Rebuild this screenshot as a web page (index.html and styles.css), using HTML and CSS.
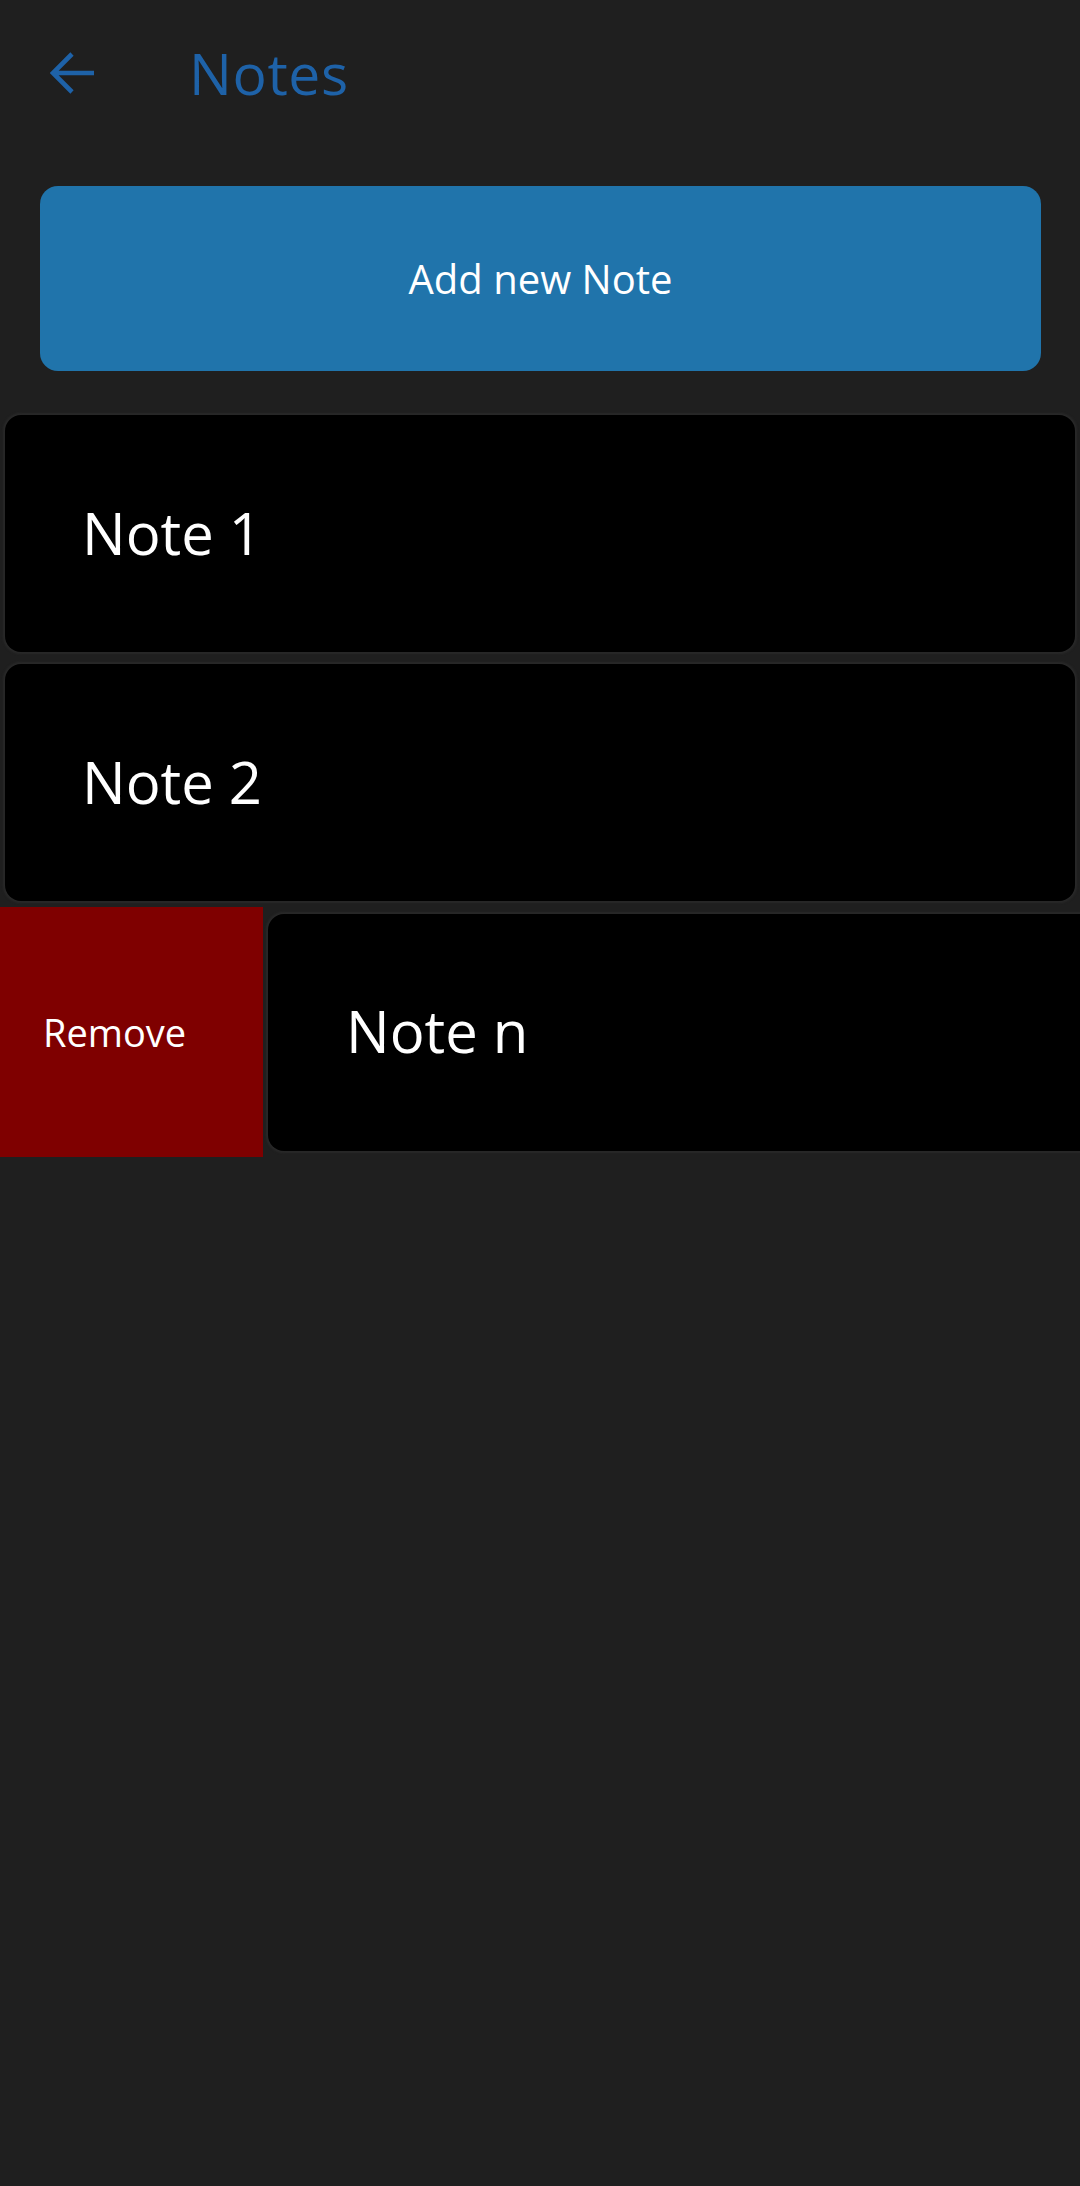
FILE: index.html
```html
<!DOCTYPE html>
<html lang="en">
<head>
<meta charset="utf-8">
<title>Notes</title>
<link rel="stylesheet" href="styles.css">
</head>
<body>
<div class="app">
  <header class="topbar">
    <button class="back" aria-label="Back">
      <svg width="46" height="44" viewBox="0 0 46 44" aria-hidden="true">
        <path d="M44 22H4M22 3L3 22L22 41" fill="none" stroke="#1e62a8" stroke-width="4.6" stroke-linecap="butt" stroke-linejoin="miter"/>
      </svg>
    </button>
    <h1 class="title">Notes</h1>
  </header>

  <button class="add-btn">Add new Note</button>

  <ul class="notes">
    <li class="row"><div class="card">Note 1</div></li>
    <li class="row"><div class="card">Note 2</div></li>
    <li class="row row-swiped">
      <div class="action-remove">Remove</div>
      <div class="card card-shifted">Note n</div>
    </li>
  </ul>
</div>
</body>
</html>
```

FILE: styles.css
```css
* {
  box-sizing: border-box;
}

html, body {
  margin: 0;
  padding: 0;
  background: #1f1f1f;
  overflow-x: hidden;
}

body {
  font-family: "Open Sans", "Noto Sans", sans-serif;
  color: #ffffff;
  width: 1080px;
  min-height: 2186px;
}

.app {
  width: 1080px;
  overflow: hidden;
}

.topbar {
  height: 146px;
  display: flex;
  align-items: center;
  padding-left: 50px;
}

.back {
  background: none;
  border: 0;
  padding: 0;
  width: 46px;
  height: 44px;
  display: flex;
  align-items: center;
  justify-content: center;
}

.back svg {
  display: block;
}

.title {
  margin: 0 0 0 93px;
  font-size: 57px;
  font-weight: 400;
  line-height: 1;
  color: #1e62a8;
  letter-spacing: 0.6px;
}

.add-btn {
  display: flex;
  align-items: center;
  justify-content: center;
  margin: 40px 39px 0 40px;
  width: 1001px;
  height: 185px;
  border: 0;
  border-radius: 18px;
  background: #2074ab;
  color: #ffffff;
  font-family: "Open Sans", "Noto Sans", sans-serif;
  font-size: 40px;
  line-height: 1;
}

.notes {
  list-style: none;
  margin: 38px 0 0 0;
  padding: 0;
}

.row {
  padding: 6px 5px 6px 5px;
  display: flex;
}

.card {
  flex: 1 1 auto;
  height: 237px;
  background: #000000;
  border-radius: 16px;
  box-shadow: 0 0 2px 2px #292929;
  display: flex;
  align-items: center;
  padding-left: 77px;
  padding-bottom: 2px;
  font-size: 58px;
  line-height: 1;
  color: #ffffff;
}

.row-swiped {
  padding: 0;
  align-items: center;
}

.action-remove {
  flex: 0 0 263px;
  height: 250px;
  background: #7f0000;
  display: flex;
  align-items: center;
  padding-left: 43px;
  font-size: 38px;
  line-height: 1;
  color: #ffffff;
}

.card-shifted {
  flex: 0 0 1071px;
  margin-left: 5px;
  padding-left: 78px;
}
```
